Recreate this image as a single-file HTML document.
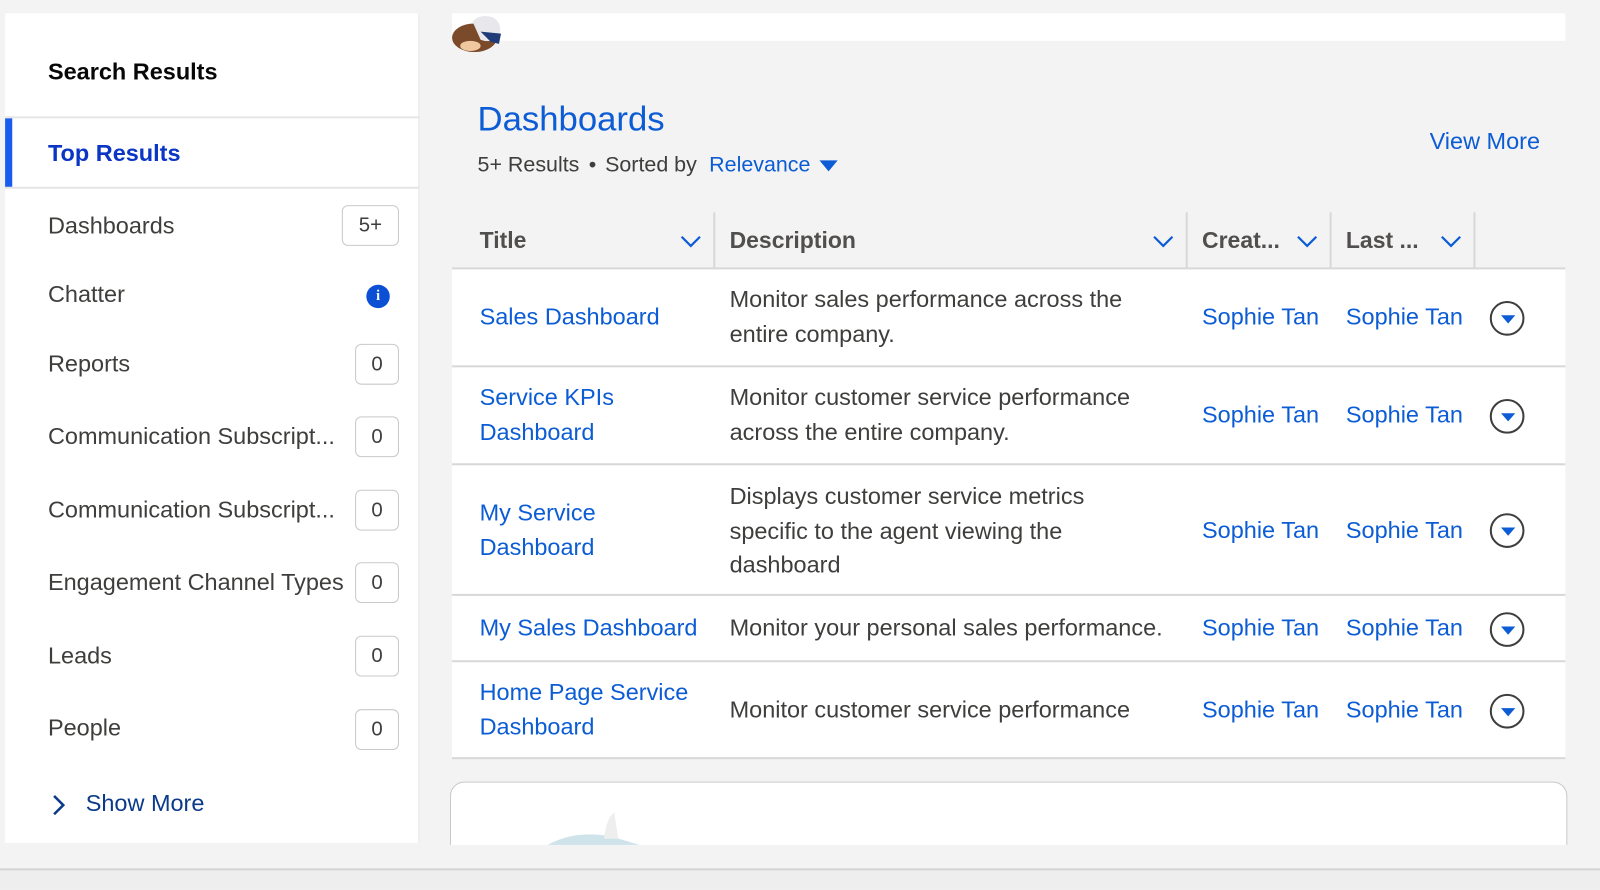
<!DOCTYPE html>
<html><head><style>
*{margin:0;padding:0;box-sizing:border-box}
body{width:1600px;height:872px;background:#f3f3f3;font-family:"Liberation Sans",sans-serif;overflow:hidden;color:#3e3e3c}
#w{position:absolute;left:0;top:0;width:1568px;height:855px;transform:scale(1.0204);transform-origin:0 0}
.a{position:absolute;white-space:nowrap}
.side{position:absolute;left:5px;top:13px;width:406px;height:813px;background:#fff;border-right:1px solid #e5e5e5}
.nav{font-size:23px;color:#3e3e3c}
.badge{position:absolute;border:1px solid #c9c9c9;border-radius:6px;font-size:20px;text-align:center;color:#3e3e3c;height:40px;line-height:38px}
.blue{color:#0b5cd5}
.tbl{position:absolute;left:443px;top:208px;width:1091px;height:535px;background:#fff}
.hd{position:absolute;left:0;top:0;width:1091px;height:56px;background:#f3f3f3;border-bottom:2px solid #d8d8d8}
.hc{position:absolute;top:15px;font-size:22.5px;font-weight:bold;color:#514f4d}
.sep{position:absolute;top:0;width:2px;height:55px;background:#d8d8d8}
.row{position:absolute;left:0;width:1091px;border-bottom:2px solid #d8d8d8}
.t{position:absolute;font-size:23px;line-height:33.5px;white-space:nowrap}
.circ{position:absolute;width:34px;height:34px;border:2px solid #3e3e3c;border-radius:50%}
.circ:after{content:"";position:absolute;left:9px;top:12px;border-left:7px solid transparent;border-right:7px solid transparent;border-top:8px solid #0b5cd5}
</style></head><body><div id="w">
<div class="side"></div>
<div class="a" style="left:47px;top:57px;font-size:23px;font-weight:bold;color:#080707">Search Results</div>
<div class="a" style="left:5px;top:114px;width:406px;height:2px;background:#e5e5e5"></div>
<div class="a" style="left:5px;top:116px;width:7px;height:68px;background:#1b5cf0"></div>
<div class="a" style="left:5px;top:183px;width:406px;height:2px;background:#e5e5e5"></div>
<div class="a" style="left:47px;top:137px;font-size:23px;font-weight:bold;color:#0a35c5">Top Results</div>
<div class="a nav" style="left:47px;top:208px">Dashboards</div><div class="badge" style="left:335px;top:201px;width:56px">5+</div>
<div class="a nav" style="left:47px;top:275px">Chatter</div>
<div class="a" style="left:359px;top:279px;width:23px;height:23px;border-radius:50%;background:#0b4fd5;color:#fff;font-size:14px;font-weight:bold;text-align:center;line-height:23px;font-family:'Liberation Serif',serif">i</div>
<div class="a nav" style="left:47px;top:343px">Reports</div><div class="badge" style="left:348px;top:337px;width:43px">0</div>
<div class="a nav" style="left:47px;top:414px">Communication Subscript...</div><div class="badge" style="left:348px;top:408px;width:43px">0</div>
<div class="a nav" style="left:47px;top:486px">Communication Subscript...</div><div class="badge" style="left:348px;top:480px;width:43px">0</div>
<div class="a nav" style="left:47px;top:557px">Engagement Channel Types</div><div class="badge" style="left:348px;top:551px;width:43px">0</div>
<div class="a nav" style="left:47px;top:629px">Leads</div><div class="badge" style="left:348px;top:623px;width:43px">0</div>
<div class="a nav" style="left:47px;top:700px">People</div><div class="badge" style="left:348px;top:695px;width:43px">0</div>
<svg class="a" style="left:50px;top:778px" width="16" height="22"><path d="M3 2 L12 11 L3 20" fill="none" stroke="#0a3a8a" stroke-width="2.5"/></svg>
<div class="a" style="left:84px;top:774px;font-size:23px;color:#0a3a8a">Show More</div>

<div class="a" style="left:443px;top:13px;width:1091px;height:27px;background:#fff"></div>
<svg class="a" style="left:441px;top:13px" width="60" height="38"><ellipse cx="24" cy="24" rx="22" ry="14" fill="#7a4a2a"/><path d="M22 8 Q30 0 42 4 Q52 10 48 22 Q40 30 30 26Z" fill="#e8e8ec"/><path d="M30 18 L40 28 L48 30 L50 20Z" fill="#1f3b78"/><ellipse cx="20" cy="32" rx="10" ry="5" fill="#f0c8a0"/></svg>
<div class="a" style="left:468px;top:98px;font-size:34px;color:#0b5cd5">Dashboards</div>
<div class="a" style="left:468px;top:150px;font-size:21px;color:#3e3e3c">5+ Results</div>
<div class="a" style="left:577px;top:150px;font-size:21px;color:#3e3e3c">•</div>
<div class="a" style="left:593px;top:150px;font-size:21px;color:#3e3e3c">Sorted by</div>
<div class="a" style="left:695px;top:150px;font-size:21px;color:#0b5cd5">Relevance</div>
<svg class="a" style="left:803px;top:157px" width="18" height="12"><path d="M0 0 L18 0 L9 11Z" fill="#0b5cd5"/></svg>
<div class="a" style="left:1401px;top:125px;font-size:23px;color:#0b5cd5">View More</div>

<div class="tbl">
<div class="hd">
<div class="hc" style="left:27px">Title</div>
<div class="hc" style="left:272px">Description</div>
<div class="hc" style="left:735px">Creat...</div>
<div class="hc" style="left:876px">Last ...</div>
<div class="sep" style="left:256px"></div><div class="sep" style="left:719px"></div><div class="sep" style="left:860px"></div><div class="sep" style="left:1001px"></div>
<svg class="a" style="left:224px;top:23px" width="20" height="12"><path d="M1 1 L10 10 L19 1" fill="none" stroke="#0b5cd5" stroke-width="2.2"/></svg>
<svg class="a" style="left:687px;top:23px" width="20" height="12"><path d="M1 1 L10 10 L19 1" fill="none" stroke="#0b5cd5" stroke-width="2.2"/></svg>
<svg class="a" style="left:828px;top:23px" width="20" height="12"><path d="M1 1 L10 10 L19 1" fill="none" stroke="#0b5cd5" stroke-width="2.2"/></svg>
<svg class="a" style="left:969px;top:23px" width="20" height="12"><path d="M1 1 L10 10 L19 1" fill="none" stroke="#0b5cd5" stroke-width="2.2"/></svg>
</div>
<div class="row" style="top:56px;height:96px">
<div class="t blue" style="left:27px;top:30px">Sales Dashboard</div>
<div class="t" style="left:272px;top:13px">Monitor sales performance across the<br>entire company.</div>
<div class="t blue" style="left:735px;top:30px">Sophie Tan</div><div class="t blue" style="left:876px;top:30px">Sophie Tan</div>
<div class="circ" style="left:1017px;top:31px"></div></div>
<div class="row" style="top:152px;height:96px">
<div class="t blue" style="left:27px;top:13px">Service KPIs<br>Dashboard</div>
<div class="t" style="left:272px;top:13px">Monitor customer service performance<br>across the entire company.</div>
<div class="t blue" style="left:735px;top:30px">Sophie Tan</div><div class="t blue" style="left:876px;top:30px">Sophie Tan</div>
<div class="circ" style="left:1017px;top:31px"></div></div>
<div class="row" style="top:248px;height:128px">
<div class="t blue" style="left:27px;top:30px">My Service<br>Dashboard</div>
<div class="t" style="left:272px;top:14px">Displays customer service metrics<br>specific to the agent viewing the<br>dashboard</div>
<div class="t blue" style="left:735px;top:47px">Sophie Tan</div><div class="t blue" style="left:876px;top:47px">Sophie Tan</div>
<div class="circ" style="left:1017px;top:47px"></div></div>
<div class="row" style="top:376px;height:65px">
<div class="t blue" style="left:27px;top:15px">My Sales Dashboard</div>
<div class="t" style="left:272px;top:15px">Monitor your personal sales performance.</div>
<div class="t blue" style="left:735px;top:15px">Sophie Tan</div><div class="t blue" style="left:876px;top:15px">Sophie Tan</div>
<div class="circ" style="left:1017px;top:16px"></div></div>
<div class="row" style="top:441px;height:95px">
<div class="t blue" style="left:27px;top:13px">Home Page Service<br>Dashboard</div>
<div class="t" style="left:272px;top:30px">Monitor customer service performance</div>
<div class="t blue" style="left:735px;top:30px">Sophie Tan</div><div class="t blue" style="left:876px;top:30px">Sophie Tan</div>
<div class="circ" style="left:1017px;top:31px"></div></div>
</div>

<div class="a" style="left:441px;top:766px;width:1095px;height:90px;background:#fff;border:1.5px solid #c9c9c9;border-radius:14px"></div>
<svg class="a" style="left:520px;top:792px" width="140" height="40"><path d="M10 40 Q40 20 80 28 L120 40Z" fill="#cfe3ea"/><path d="M72 30 Q74 10 82 4 Q84 18 86 30Z" fill="#eee"/></svg>
<div class="a" style="left:0;top:828px;width:1600px;height:44px;background:#f3f3f3"></div>
<div class="a" style="left:0;top:851px;width:1600px;height:21px;background:#eeeeee;border-top:2px solid #d4d4d4"></div>
</div></body></html>
